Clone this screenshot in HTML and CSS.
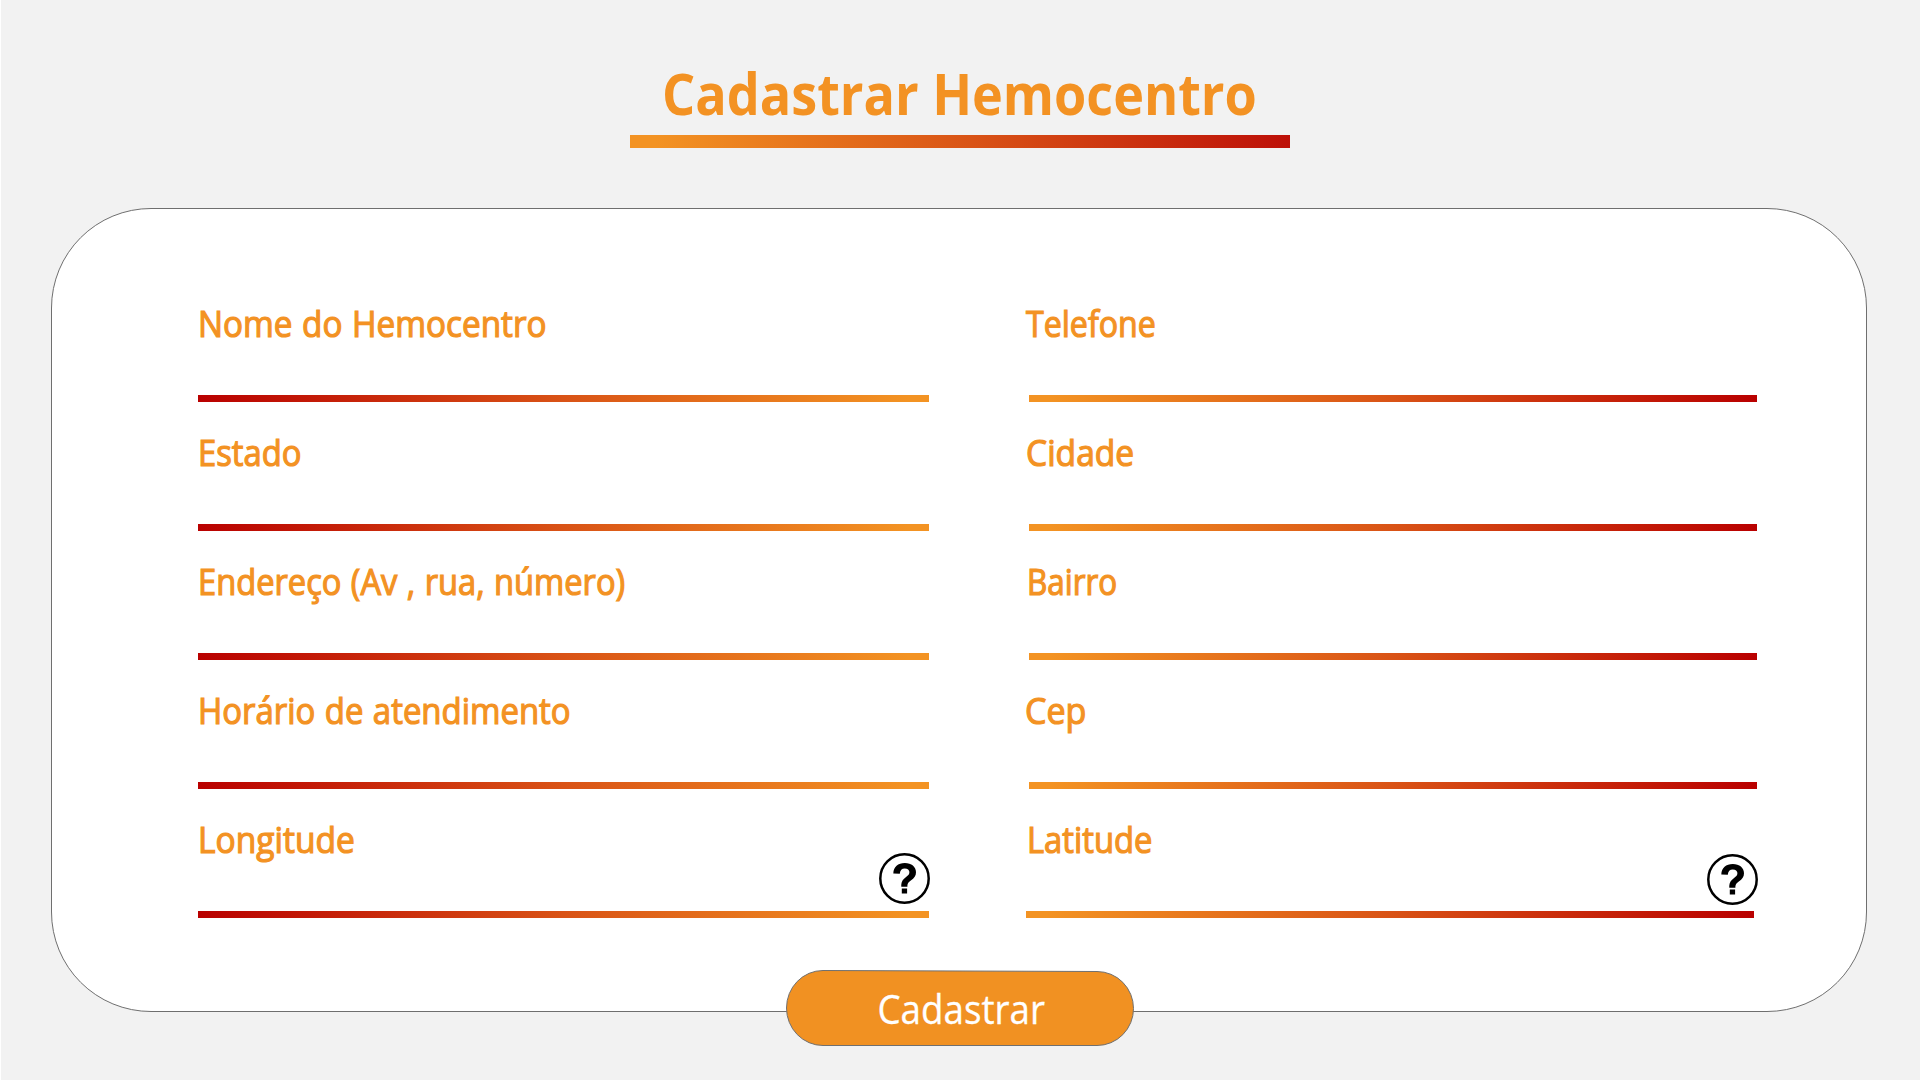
FILE: index.html
```html
<!DOCTYPE html>
<html lang="pt-BR">
<head>
<meta charset="utf-8">
<title>Cadastrar Hemocentro</title>
<link rel="stylesheet" href="styles.css">
</head>
<body>
<main class="page">
  <header class="header">
    <h1 class="title"><span class="title-text">Cadastrar Hemocentro</span></h1>
  </header>
  <form class="card">
    <div class="fields">
      <div class="field"><label class="label nome">Nome do Hemocentro</label></div>
      <div class="field right"><label class="label telefone">Telefone</label></div>
      <div class="field"><label class="label estado">Estado</label></div>
      <div class="field right"><label class="label cidade">Cidade</label></div>
      <div class="field"><label class="label endereco">Endereço (Av , rua, número)</label></div>
      <div class="field right"><label class="label bairro">Bairro</label></div>
      <div class="field"><label class="label horario">Horário de atendimento</label></div>
      <div class="field right"><label class="label cep">Cep</label></div>
      <div class="field"><label class="label longitude">Longitude</label>
        <svg class="help" viewBox="0 0 51 51"><circle cx="25.5" cy="25.5" r="24.2"/><path d="M14.3 20.4C14.5 13.8 19 10 25.8 10C32.5 10 37 13.8 37 19.2C37 22.8 35.3 25 31.8 27.6C29 29.7 28.4 30.6 28.4 33.8H22.3C22.2 29.1 23.4 26.8 26.8 24.3C29.5 22.3 30.4 21.2 30.4 19.1C30.4 16.8 28.6 15.4 25.8 15.4C22.8 15.4 21.1 17.2 20.8 20.7ZM22.8 35.5H28.1V40.5H22.8Z"/></svg>
      </div>
      <div class="field right last"><label class="label latitude">Latitude</label>
        <svg class="help" viewBox="0 0 51 51"><circle cx="25.5" cy="25.5" r="24.2"/><path d="M14.3 20.4C14.5 13.8 19 10 25.8 10C32.5 10 37 13.8 37 19.2C37 22.8 35.3 25 31.8 27.6C29 29.7 28.4 30.6 28.4 33.8H22.3C22.2 29.1 23.4 26.8 26.8 24.3C29.5 22.3 30.4 21.2 30.4 19.1C30.4 16.8 28.6 15.4 25.8 15.4C22.8 15.4 21.1 17.2 20.8 20.7ZM22.8 35.5H28.1V40.5H22.8Z"/></svg>
      </div>
    </div>
    <button class="submit" type="button">
      <svg class="submit-shape" viewBox="0 0 348 76"><path d="M37 .5L311 1.5A36.5 37 0 0 1 311 75.5H37A36.5 37.5 0 0 1 37 .5Z"/></svg>
      <span class="submit-text">Cadastrar</span>
    </button>
  </form>
</main>
</body>
</html>
```
FILE: styles.css
```css
* { box-sizing: border-box; }
body {
  margin: 0;
  background: #f1f1f1;
  font-family: "Open Sans", "Noto Sans", sans-serif;
  color: #f39223;
}
.page {
  width: 1920px;
  height: 1080px;
  overflow: hidden;
  border-left: 1px solid #fff;
  padding-left: 50px;
  background: #f2f2f2;
}
.header {
  width: 660px;
  height: 208px;
  margin-left: 579px;
  padding-top: 54px;
}
.title {
  margin: 0;
  height: 94px;
  padding-left: 32px;
  border-bottom: 13px solid;
  border-image: linear-gradient(90deg, #f39323 4%, #d95316 52%, #bd1008) 1;
  font-size: 58px;
  font-weight: 700;
  line-height: 78px;
  white-space: nowrap;
}
.title-text {
  display: inline-block;
  transform: scaleX(0.899);
  transform-origin: 0 0;
}
.card {
  position: relative;
  width: 1816px;
  height: 804px;
  border: 1px solid #6f6f6f;
  border-radius: 100px;
  background: #fff;
  padding: 64px 0 0 146px;
}
.fields {
  display: grid;
  grid-template-columns: 731px 728px;
  grid-auto-rows: 129px;
  column-gap: 100px;
}
.field {
  position: relative;
  border-bottom: 7px solid;
  border-image: linear-gradient(90deg, #b90000, #d95316 50%, #f39323 97%) 1;
}
.right {
  border-image: linear-gradient(90deg, #f39323 3%, #d95316 50%, #b90000) 1;
}
.last { margin: 0 3px 0 -3px; }
.label {
  display: block;
  padding-top: 26px;
  font-size: 36px;
  font-weight: 400;
  line-height: 50px;
  white-space: nowrap;
  transform-origin: 0 0;
  -webkit-text-stroke: 1.2px currentColor;
}
.nome { word-spacing: 1px; transform: scaleX(0.924); }
.estado { transform: scaleX(0.91); }
.endereco { word-spacing: 1px; transform: scaleX(0.907); }
.horario { word-spacing: 1px; transform: scaleX(0.914); }
.longitude { transform: scaleX(0.932); }
.telefone { margin-left: -3px; transform: scaleX(0.893); }
.cidade { margin-left: -3.5px; transform: scaleX(0.932); }
.bairro { margin-left: -2px; transform: scaleX(0.872); }
.cep { margin-left: -4.5px; transform: scaleX(0.945); }
.latitude { margin-left: 1px; transform: scaleX(0.91); }
.help {
  position: absolute;
  right: -1px;
  bottom: 7px;
  width: 51px;
  height: 51px;
}
.last .help { right: -4px; bottom: 6px; }
.help circle { fill: #fff; stroke: #000; stroke-width: 2.5; }
.submit {
  position: absolute;
  left: 734px;
  top: 761px;
  width: 348px;
  height: 76px;
  padding: 1px 0 0 2px;
  border: 0;
  background: none;
  color: #fff;
  font: 400 40px/76px "Open Sans", "Noto Sans", sans-serif;
}
.submit-shape {
  position: absolute;
  left: 0;
  top: 0;
  width: 348px;
  height: 76px;
}
.submit-shape path { fill: #f19122; stroke: #707070; }
.submit-text {
  display: inline-block;
  position: relative;
  transform: scaleX(0.919);
  -webkit-text-stroke: 0.3px currentColor;
}
```
